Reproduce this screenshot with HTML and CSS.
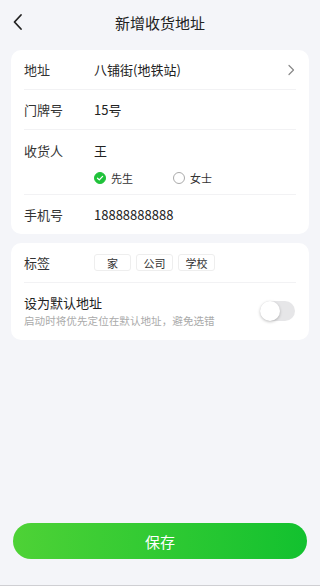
FILE: index.html
```html
<!DOCTYPE html>
<html lang="zh-CN">
<head>
    <meta charset="UTF-8">
    <meta name="viewport" content="width=device-width, initial-scale=1.0">
    <title>新增收货地址</title>
    <link rel="stylesheet" href="styles.css">
</head>
<body>
    <div class="page">
        <header class="nav">
            <span class="back">
                <svg width="12" height="18" viewBox="0 0 12 18"><path d="M9 2 L2.5 9 L9 16" fill="none" stroke="#222" stroke-width="1.8" stroke-linecap="round" stroke-linejoin="round"/></svg>
            </span>
            <h1>新增收货地址</h1>
        </header>

        <main class="content">
            <div class="card">
                <div class="row">
                    <span class="label">地址</span>
                    <span class="value">八铺街(地铁站)</span>
                    <svg class="arrow" width="8" height="12" viewBox="0 0 8 12"><path d="M2 1.5 L6.5 6 L2 10.5" fill="none" stroke="#888" stroke-width="1.2" stroke-linecap="round" stroke-linejoin="round"/></svg>
                </div>
                <div class="row">
                    <span class="label">门牌号</span>
                    <span class="value">15号</span>
                </div>
                <div class="row row-person">
                    <div class="person-line">
                        <span class="label">收货人</span>
                        <span class="value">王</span>
                    </div>
                    <div class="gender">
                        <span class="radio">
                            <span class="dot checked">
                                <svg width="8" height="8" viewBox="0 0 8 8"><path d="M1.5 4.2 L3.3 5.9 L6.6 2.4" fill="none" stroke="#fff" stroke-width="1.3" stroke-linecap="round" stroke-linejoin="round"/></svg>
                            </span>
                            先生
                        </span>
                        <span class="radio">
                            <span class="dot"></span>
                            女士
                        </span>
                    </div>
                </div>
                <div class="row last">
                    <span class="label">手机号</span>
                    <span class="value">18888888888</span>
                </div>
            </div>

            <div class="card">
                <div class="row">
                    <span class="label">标签</span>
                    <div class="tags">
                        <span class="tag">家</span>
                        <span class="tag">公司</span>
                        <span class="tag">学校</span>
                    </div>
                </div>
                <div class="row last row-default">
                    <div class="default-text">
                        <div class="default-title">设为默认地址</div>
                        <div class="default-desc">启动时将优先定位在默认地址，避免选错</div>
                    </div>
                    <span class="switch"><span class="knob"></span></span>
                </div>
            </div>
        </main>

        <footer class="footer">
            <button class="save-btn">保存</button>
        </footer>
    </div>
</body>
</html>
```

FILE: styles.css
```css
body {
    margin: 0;
    padding: 0;
    font-family: "Noto Sans CJK SC", "Noto Sans", sans-serif;
    background-color: #f4f5f9;
    color: #333;
}

.page {
    height: 586px;
    display: flex;
    flex-direction: column;
    box-sizing: border-box;
    border-bottom: 1px solid #cfcfd3;
}

.nav {
    height: 44px;
    display: flex;
    align-items: center;
    justify-content: center;
    position: relative;
}

.nav h1 {
    margin: 0;
    font-size: 15px;
    font-weight: normal;
    color: #222;
}

.back {
    position: absolute;
    left: 12px;
    top: 13px;
    display: flex;
}

.content {
    flex: 1;
    padding: 6px 11px 0;
    display: flex;
    flex-direction: column;
    gap: 9px;
}

.card {
    background-color: #fff;
    border-radius: 10px;
    padding: 0 13px;
}

.row {
    display: flex;
    align-items: center;
    height: 39px;
    border-bottom: 1px solid #f2f2f4;
    font-size: 13px;
}

.row.last {
    border-bottom: none;
}

.label {
    width: 70px;
    flex-shrink: 0;
    color: #333;
}

.value {
    flex: 1;
    color: #222;
}

.arrow {
    margin-right: 1px;
}

.row-person {
    height: 64px;
    flex-direction: column;
    align-items: stretch;
    justify-content: flex-start;
}

.person-line {
    display: flex;
    align-items: center;
    height: 40px;
}

.gender {
    display: flex;
    padding-left: 70px;
    font-size: 11px;
}

.radio {
    display: flex;
    align-items: center;
    gap: 5px;
    width: 79px;
}

.dot {
    width: 12px;
    height: 12px;
    border-radius: 50%;
    border: 1px solid #aaa;
    box-sizing: border-box;
    display: flex;
    align-items: center;
    justify-content: center;
}

.dot.checked {
    background-color: #1fc23a;
    border-color: #1fc23a;
}

.tags {
    display: flex;
    gap: 5px;
}

.tag {
    width: 37px;
    height: 17px;
    box-sizing: border-box;
    border: 1px solid #eee;
    border-radius: 3px;
    font-size: 11px;
    display: flex;
    align-items: center;
    justify-content: center;
}

.row-default {
    height: 57px;
    justify-content: space-between;
    padding-bottom: 1px;
    box-sizing: border-box;
}

.default-title {
    font-size: 13px;
    color: #222;
    line-height: 20px;
}

.default-desc {
    font-size: 10.6px;
    color: #aaa;
    line-height: 16px;
}

.switch {
    width: 35px;
    height: 20px;
    border-radius: 10px;
    background-color: #e6e6e8;
    position: relative;
    margin-right: 1px;
}

.knob {
    position: absolute;
    left: 0;
    top: 0;
    width: 20px;
    height: 20px;
    border-radius: 50%;
    background-color: #fff;
    box-shadow: 0 1px 3px rgba(0, 0, 0, 0.25);
}

.footer {
    padding: 0 13px 26px;
}

.save-btn {
    width: 100%;
    height: 36px;
    border: none;
    border-radius: 18px;
    background: linear-gradient(90deg, #4ed236, #12c12f);
    color: #fff;
    font-family: "Noto Sans CJK SC", sans-serif;
    font-size: 15px;
}
```
